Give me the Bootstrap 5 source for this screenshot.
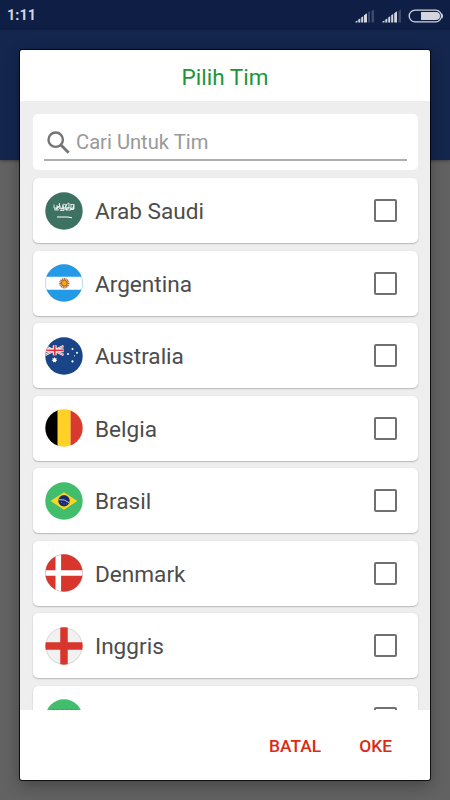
<!DOCTYPE html>
<html lang="id">
<head>
<meta charset="utf-8">
<meta name="viewport" content="width=device-width, initial-scale=1">
<title>Pilih Tim</title>
<link href="https://cdn.jsdelivr.net/npm/bootstrap@5.3.0/dist/css/bootstrap.min.css" rel="stylesheet">
<style>
body{font-family:Roboto,"Liberation Sans",sans-serif;background:#626262;width:450px;height:800px}
.statusbar{height:30px;background:#0e1e44;color:#d3d6de;padding:1px 7px 0;font-size:14.5px;font-weight:700}
.appbar{height:130px;background:#14264e;box-shadow:0 1px 3px rgba(0,0,0,.35)}
.dialog{left:20px;top:50px;width:410px;height:730px;border-radius:2px;box-shadow:0 0 0 1px rgba(0,0,0,.8),0 5px 16px rgba(0,0,0,.32)}
.dialog-title{height:51px;color:#1a9639;font-size:22.5px;padding-top:4px}
.list-area{height:609px;background:#eee;padding:13px 12.5px 0 12.5px}
.panel{border-radius:5px;background:#fff}
.searchbox{height:56px;margin-bottom:8px;padding:6px 11px 9px}
.search-line{height:41px;border-bottom:2px solid #adadad;padding:5px 0 0 3px}
.search-input{font-size:20.2px;color:#999;margin-left:6.5px;line-height:36px}
.team{height:65px;margin-bottom:7.5px;padding:0 21px 0 12px;box-shadow:0 1px 1.5px rgba(0,0,0,.22),0 0 1px rgba(0,0,0,.13)}
.team-name{font-size:22.6px;color:#4c4c4c;margin-left:12.5px;line-height:28px;padding-top:3px}
.tick{width:23px;height:23px;border:2px solid #707070;border-radius:2px}
.flag{width:38px;height:38px}
.actions{height:70px;padding-top:3px;font-size:17.4px}
.actions button{color:#dc2a10;background:none;border:0;padding:0;font-weight:500}
.actions .ok{margin:0 38px 0 38px}
</style>
<script src="https://cdn.jsdelivr.net/npm/bootstrap@5.3.0/dist/js/bootstrap.bundle.min.js"></script>
</head>
<body class="m-0 overflow-hidden position-relative">
<svg width="0" height="0" class="position-absolute"><defs><clipPath id="disc"><circle cx="19" cy="19" r="18.7"/></clipPath></defs></svg>
<header>
  <div class="statusbar d-flex align-items-center justify-content-between">
    <span>1:11</span>
    <svg width="88" height="16" viewBox="355 7 88 16">
      <g fill="#d3d6de"><path d="M355.500 21.500v-1l2-1v2zM358.300 21.500v-3l2-1v4zM361.200 21.500v-5l2-1.300v6.300zM364 21.500v-7.200l3-2v9.200z"/><path d="M382.500 21.500v-1l2-1v2zM385.300 21.500v-3l2-1v4zM388.200 21.500v-5l2-1.300v6.300zM391.200 21.500v-7.200l2-1.300v8.500zM394.200 21.500v-9.200l2.800-2v11.200z"/></g>
      <path fill="#3b496b" d="M368 21.500V11.300l2-1.300v11.500zM371.500 21.500V10l2.500-1.500v13zM398.500 21.500V10l2.500-1.500v13z"/>
      <rect x="409.200" y="9.200" width="32.300" height="11.600" rx="5.800" fill="none" stroke="#d3d6de" stroke-width="1.300"/>
      <path d="M421 11h15a4 4 0 0 1 0 8h-15z" fill="#d3d6de"/>
      <path d="M442 12.700q1 2.300 0 4.600" stroke="#d3d6de" fill="none"/>
    </svg>
  </div>
  <div class="appbar"></div>
</header>
<main class="dialog bg-white position-absolute d-flex flex-column">
  <h1 class="dialog-title d-flex align-items-center justify-content-center m-0 fw-normal">Pilih Tim</h1>
  <div class="list-area overflow-hidden">
    <div class="panel searchbox"><div class="search-line d-flex align-items-center">
      <svg width="23" height="23" viewBox="0 0 23 23" fill="none" stroke="#757575"><circle cx="8.700" cy="8.700" r="7.200" stroke-width="2.400"/><path d="M13.700 13.700l8 8" stroke-width="2.800"/></svg>
      <span class="search-input">Cari Untuk Tim</span>
    </div></div>

    <div class="panel team d-flex align-items-center">
      <svg class="flag" viewBox="0 0 38 38"><circle cx="19" cy="19" r="18.700" fill="#3d7262"/><g stroke="#fff" fill="none"><path stroke-width=".8" d="M9 12.500v3.500h3v-3M9.500 18h4l-2-2 3-1v-4M14 12.500l3 5 1-5 1 6h-4M18.500 12l3 1-2 3h3M21 18v-5l3-2v5l-3 2h5v-6M25.500 12.500h3v5h-2l2-3M25 17h4v-5M9 17h3l1-3 2 3 3-1 2 1.500 3-2 4 1"/><path stroke-width="1" d="M12 25h11l4 .8"/></g></svg>
      <span class="team-name flex-grow-1">Arab Saudi</span><span class="tick"></span>
    </div>
    <div class="panel team d-flex align-items-center">
      <svg class="flag" viewBox="0 0 38 38"><g clip-path="url(#disc)"><path fill="#239ae5" d="M0 0h38v38H0z"/><path fill="#fff" d="M0 12.700h38v13H0z"/></g><circle cx="19" cy="19" r="18.400" fill="none" stroke="#777" stroke-opacity=".2" stroke-width=".6"/><circle cx="19.300" cy="19.200" r="4.200" fill="none" stroke="#b86a3c" stroke-width="2" stroke-dasharray="1.200 .5"/><circle cx="19.300" cy="19.200" r="3" fill="#f3a80b" stroke="#964a17" stroke-width=".8"/></svg>
      <span class="team-name flex-grow-1">Argentina</span><span class="tick"></span>
    </div>
    <div class="panel team d-flex align-items-center">
      <svg class="flag" viewBox="0 0 38 38"><g clip-path="url(#disc)"><path fill="#194487" d="M0 0h38v38H0z"/><path d="M0 9l18.500 9M0 18l18.500-9" stroke="#fff" stroke-width="2.200"/><path d="M0 9l18.500 9M0 18l18.500-9" stroke="#e65a62" stroke-width=".8"/><path d="M9.700 8.300v10M0 13.400h18.700" stroke="#fff" stroke-width="3.800"/><path d="M9.700 8.300v10M0 13.400h18.700" stroke="#e5343e" stroke-width="1.900"/><path fill="#fff" d="M9.500 20.100l.7 1.300 1.500-.3-.5 1.400 1.100 1-1.400.5-.1 1.500-1.300-.8-1.300.8-.1-1.500-1.400-.5 1.100-1-.5-1.400 1.500.3z"/><g fill="#fff"><circle cx="27.500" cy="11.900" r="1"/><circle cx="32" cy="15.700" r="1"/><circle cx="23" cy="17" r="1"/><circle cx="27.500" cy="24.400" r="1.100"/><circle cx="29.500" cy="18.800" r=".6"/></g></g></svg>
      <span class="team-name flex-grow-1">Australia</span><span class="tick"></span>
    </div>
    <div class="panel team d-flex align-items-center">
      <svg class="flag" viewBox="0 0 38 38"><g clip-path="url(#disc)"><path d="M0 0h13v38H0z"/><path fill="#ffd025" d="M12.500 0h13.200v38H12.500z"/><path fill="#d83a2f" d="M25.600 0H38v38H25.600z"/></g></svg>
      <span class="team-name flex-grow-1">Belgia</span><span class="tick"></span>
    </div>
    <div class="panel team d-flex align-items-center">
      <svg class="flag" viewBox="0 0 38 38"><circle cx="19" cy="19" r="18.700" fill="#42bd6b"/><path fill="#fdd51f" d="M5.500 19L19 10.300 32.300 19 19 27.700z"/><circle cx="19" cy="18.800" r="5.700" fill="#172a6f"/><path d="M13.800 17.700q5.600-1 10.200 3" stroke="#b9c6d8" fill="none"/><path d="M16 20.500h1M18.500 22h1M21 22h.8" stroke="#7892b4" stroke-width=".8"/></svg>
      <span class="team-name flex-grow-1">Brasil</span><span class="tick"></span>
    </div>
    <div class="panel team d-flex align-items-center">
      <svg class="flag" viewBox="0 0 38 38"><g clip-path="url(#disc)"><path fill="#d8352d" d="M0 0h38v38H0z"/><path d="M13.300 0v38M0 19h38" stroke="#fff" stroke-width="5.600"/></g><circle cx="19" cy="19" r="18.400" fill="none" stroke="#777" stroke-opacity=".25" stroke-width=".6"/></svg>
      <span class="team-name flex-grow-1">Denmark</span><span class="tick"></span>
    </div>
    <div class="panel team d-flex align-items-center">
      <svg class="flag" viewBox="0 0 38 38"><g clip-path="url(#disc)"><path fill="#f1f1f1" d="M0 0h38v38H0z"/><circle cx="19" cy="19" r="18.200" fill="none" stroke="#d5d5d5"/><path d="M19 0v38M0 19h38" stroke="#d8352d" stroke-width="7.500"/></g></svg>
      <span class="team-name flex-grow-1">Inggris</span><span class="tick"></span>
    </div>
    <div class="panel team d-flex align-items-center">
      <svg class="flag" viewBox="0 0 38 38"><g clip-path="url(#disc)"><path fill="#42bd6b" d="M0 0h38v38H0z"/><path fill="#fff" d="M0 12.700h38v13H0z"/><path fill="#d8352d" d="M0 25.500h38V38H0z"/><path d="M7 10.700h26" stroke="#2c9e52" stroke-dasharray="2.500 2"/></g></svg>
      <span class="team-name flex-grow-1"></span><span class="tick"></span>
    </div>
  </div>
  <div class="actions d-flex align-items-center justify-content-end">
    <button type="button">BATAL</button><button class="ok" type="button">OKE</button>
  </div>
</main>
</body>
</html>
